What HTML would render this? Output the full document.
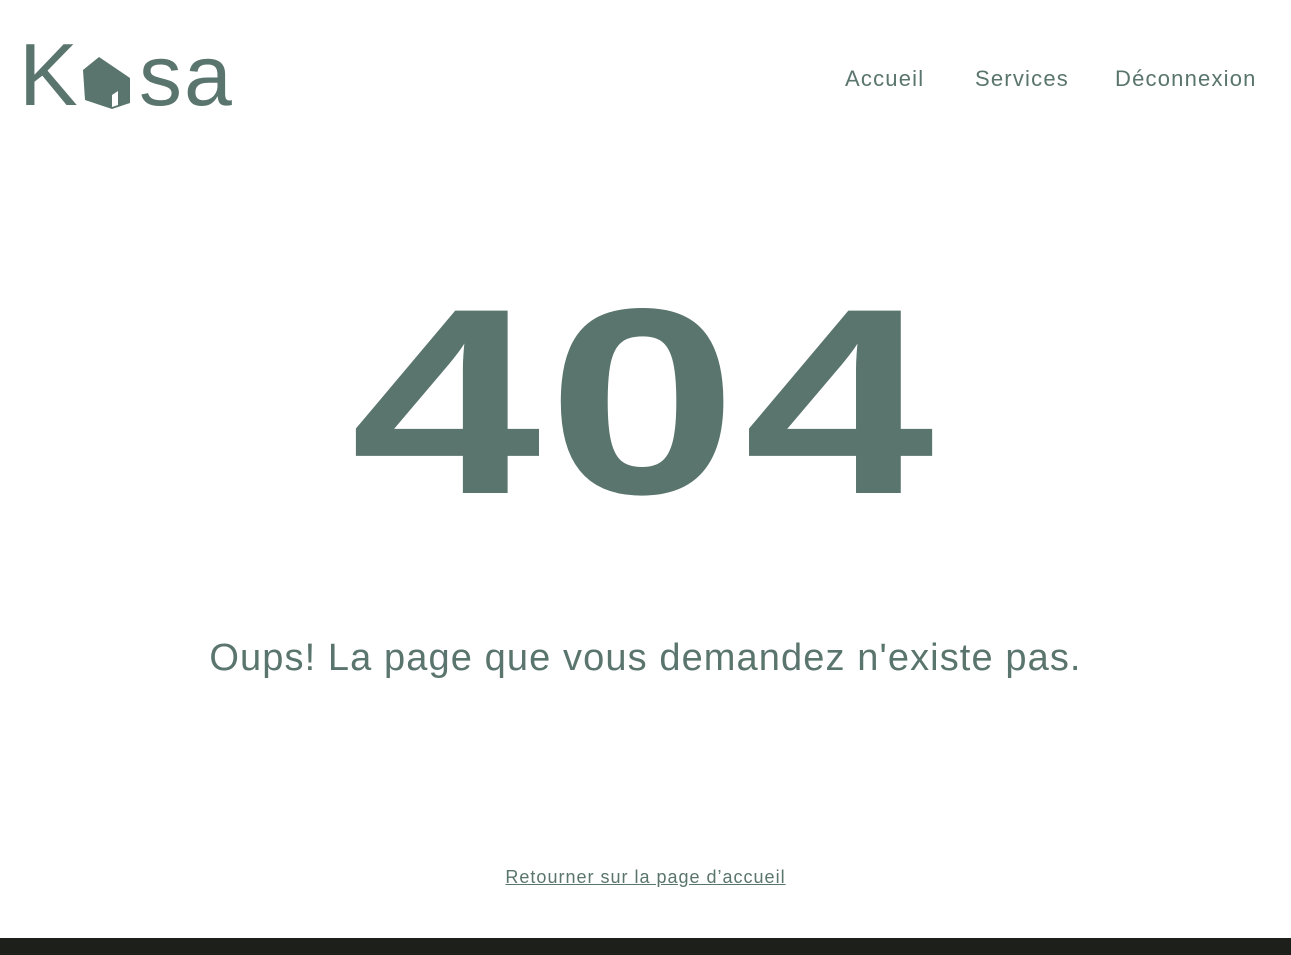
<!DOCTYPE html>
<html><head><meta charset="utf-8"><style>
body{margin:0;width:1291px;height:955px;background:#fff;position:relative;overflow:hidden;font-family:"Liberation Sans",sans-serif;color:#5a756d}
.nav{position:absolute;top:66px;font-size:22px;letter-spacing:1.2px;color:#5a756d}
.bigw{position:absolute;left:0;width:1291px;top:265px;text-align:center}
.big{display:inline-block;font-weight:bold;font-size:265px;line-height:275px;letter-spacing:5px;transform:scaleX(1.29);color:#5a756d}
.msg{position:absolute;left:0;width:1291px;top:637px;text-align:center;font-size:38px;letter-spacing:1.1px}
.lnk{position:absolute;left:0;width:1291px;top:867px;text-align:center;font-size:18px;letter-spacing:1px;text-decoration:underline}
.foot{position:absolute;left:0;top:938px;width:1291px;height:17px;background:#1c1f1a}
</style></head><body>
<svg style="position:absolute;left:0;top:0" width="260" height="130">
<text x="19" y="105" font-family="Liberation Sans" font-size="88" fill="#5a756d">K</text>
<polygon points="83,70 99,57 130,78 130,103 112,109 85,100" fill="#5a756d"/>
<polygon points="112,95 118,91 118,105 112,107" fill="#fff"/>
<text x="139" y="105" font-family="Liberation Sans" font-size="86" fill="#5a756d" letter-spacing="2">sa</text>
</svg>
<div class="nav" style="left:845px">Accueil</div>
<div class="nav" style="left:975px">Services</div>
<div class="nav" style="left:1115px">Déconnexion</div>
<div class="bigw"><span class="big">404</span></div>
<div class="msg">Oups! La page que vous demandez n'existe pas.</div>
<div class="lnk">Retourner sur la page d’accueil</div>
<div class="foot"></div>
</body></html>
